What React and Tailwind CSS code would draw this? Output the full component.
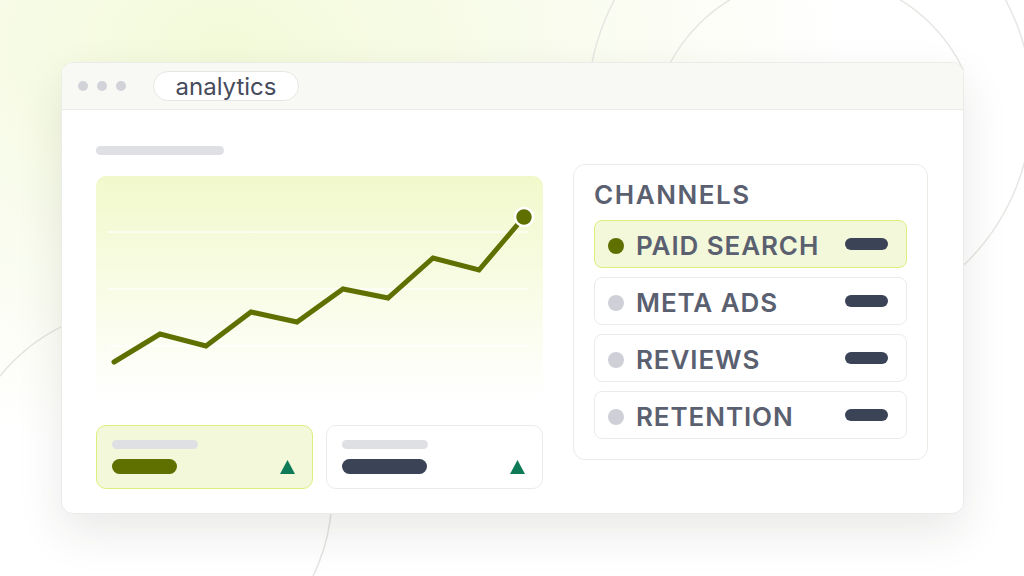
import React from "react";

const channels = [
  { name: "PAID SEARCH", active: true },
  { name: "META ADS" },
  { name: "REVIEWS" },
  { name: "RETENTION" },
];

const points = [
  [18, 186], [64, 158], [110, 170], [155, 136], [201, 146],
  [247, 113], [292, 122], [337, 82], [383, 94], [428, 41],
];

function Backdrop() {
  return (
    <svg className="pointer-events-none absolute inset-0" width="1024" height="576" fill="none">
      <defs>
        <clipPath id="top-only">
          <rect x="0" y="0" width="1024" height="70" />
        </clipPath>
      </defs>
      <circle cx="810" cy="105" r="222" stroke="#e6e6e3" strokeWidth="1.5" />
      <circle cx="815" cy="140" r="164" stroke="#e6e6e3" strokeWidth="1.5" clipPath="url(#top-only)" />
      <circle cx="145" cy="494" r="187" stroke="#e3e3e0" strokeWidth="1.5" />
    </svg>
  );
}

function Triangle() {
  return (
    <svg width="15" height="14" viewBox="0 0 15 14">
      <polygon points="7.5,0 15,14 0,14" fill="#0f7a58" />
    </svg>
  );
}

function StatCard({ active, barWidth }) {
  return (
    <div
      className={
        "h-[64px] w-[217px] rounded-[10px] border px-[15px] pt-[14px] " +
        (active ? "border-[#d9f07c] bg-[#f2f8d9]" : "border-[#ebebe8] bg-white")
      }
    >
      <div className="h-[9px] w-[86px] rounded-full bg-[#dfe0e4]" />
      <div className="mt-[10px] flex items-center justify-between pr-[2px]">
        <div
          className={"h-[15px] rounded-full " + (active ? "bg-[#5f7000]" : "bg-[#3b4357]")}
          style={{ width: barWidth }}
        />
        <Triangle />
      </div>
    </div>
  );
}

function Chart() {
  const d = points.map((p, i) => (i ? "L" : "M") + p[0] + " " + p[1]).join(" ");
  return (
    <div className="h-[224px] w-[447px] rounded-[10px] bg-gradient-to-b from-[#f1f9cb] to-white">
      <svg width="447" height="224" viewBox="0 0 447 224" fill="none">
        {[56, 113, 170].map((y) => (
          <line key={y} x1="12" x2="432" y1={y} y2={y} stroke="#ffffff" strokeOpacity="0.8" strokeWidth="1.5" />
        ))}
        <path d={d} stroke="#5f7000" strokeWidth="5" strokeLinejoin="miter" strokeLinecap="round" />
        <circle cx="428" cy="41" r="9" fill="#5f7000" stroke="#ffffff" strokeWidth="2.5" />
      </svg>
    </div>
  );
}

export default function App() {
  return (
    <div
      className="relative h-[576px] w-[1024px] overflow-hidden bg-[radial-gradient(ellipse_at_22%_8%,#f3fad9_0%,#f9fcee_30%,#ffffff_55%)] pl-[61px] pt-[62px]"
      style={{ fontFamily: "Inter, 'Noto Sans', sans-serif" }}
    >
      <Backdrop />
      <div className="relative h-[452px] w-[903px] overflow-hidden rounded-[12px] border border-[#ebebe7] bg-white shadow-[0_18px_45px_rgba(40,40,30,0.10)]">
        <div className="flex h-[47px] items-center border-b border-[#ebebe6] bg-[#f8f8f5] pl-[16px]">
          <div className="flex gap-[9px]">
            <span className="h-[10px] w-[10px] rounded-full bg-[#d2d2d9]" />
            <span className="h-[10px] w-[10px] rounded-full bg-[#d2d2d9]" />
            <span className="h-[10px] w-[10px] rounded-full bg-[#d2d2d9]" />
          </div>
          <div className="ml-[27px] flex h-[30px] w-[146px] items-center justify-center rounded-full border border-[#e6e6e2] bg-white text-[24px] leading-none text-[#464b5b]">
            <span className="pt-[1px]">analytics</span>
          </div>
        </div>

        <div className="flex pl-[34px] pt-[36px]">
          <div className="w-[447px]">
            <div className="h-[9px] w-[128px] rounded-full bg-[#dfe0e4]" />
            <div className="mt-[21px]">
              <Chart />
            </div>
            <div className="mt-[25px] flex gap-[13px]">
              <StatCard active barWidth={65} />
              <StatCard barWidth={85} />
            </div>
          </div>

          <div className="ml-[30px] mt-[18px] h-[296px] w-[355px] rounded-[12px] border border-[#ebebe6] bg-white px-[20px] pt-[17px]">
            <div className="text-[26px] font-semibold leading-[26px] tracking-[0.06em] text-[#5a6070]">
              CHANNELS
            </div>
            <div className="mt-[12px] flex flex-col gap-[9px]">
              {channels.map((c) => (
                <div
                  key={c.name}
                  className={
                    "flex h-[48px] items-center rounded-[8px] border pl-[13px] pr-[18px] " +
                    (c.active ? "border-[#d9f07c] bg-[#f2f8d9]" : "border-[#ebebe8] bg-white")
                  }
                >
                  <span
                    className={
                      "mt-[3px] h-[16px] w-[16px] shrink-0 rounded-full " + (c.active ? "bg-[#5f7000]" : "bg-[#cfd0d7]")
                    }
                  />
                  <span className="ml-[12px] flex-1 pt-[4px] text-[26px] font-semibold leading-[26px] tracking-[0.035em] text-[#5a6070]">
                    {c.name}
                  </span>
                  <span className="h-[12px] w-[43px] rounded-full bg-[#3b4357]" />
                </div>
              ))}
            </div>
          </div>
        </div>
      </div>
    </div>
  );
}
